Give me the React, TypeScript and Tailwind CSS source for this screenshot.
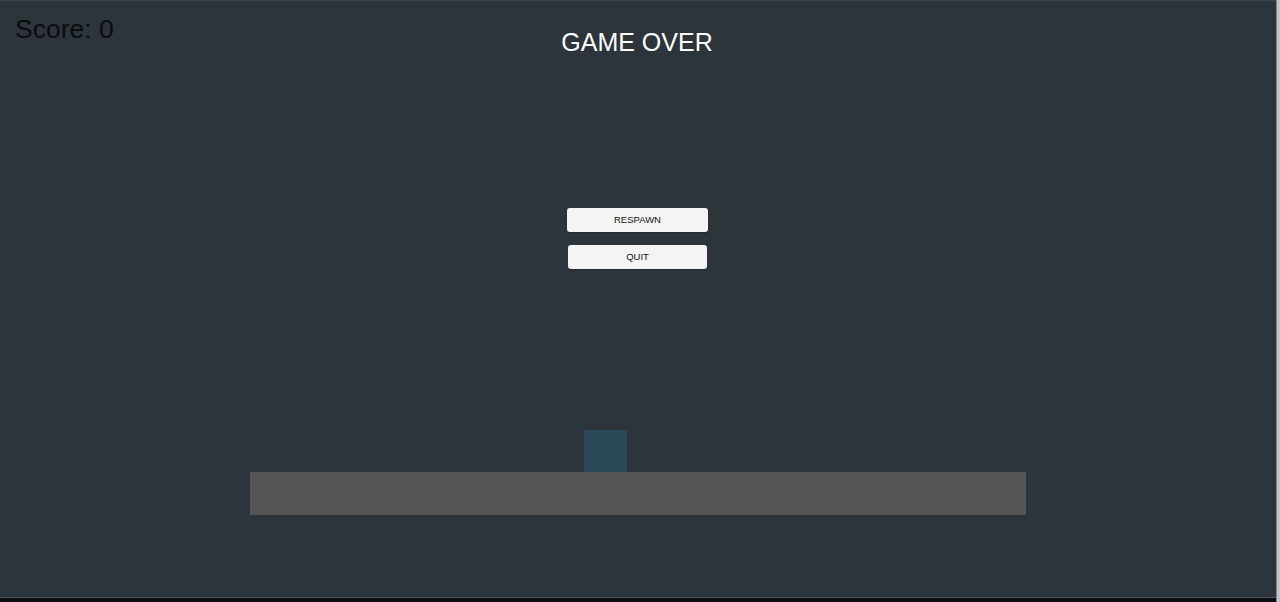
const font = { fontFamily: '"Liberation Sans", Arial, sans-serif' };

const MenuButton = ({ label, wide }: { label: string; wide?: boolean }) => (
  <button
    className={`h-[24px] rounded-[3px] bg-[#f4f4f4] text-[9.5px] leading-none text-[#111] shadow-[0_1px_1px_rgba(0,0,0,0.25)] ${
      wide ? 'w-[141px]' : 'w-[139px]'
    }`}
  >
    {label}
  </button>
);

export default function App() {
  return (
    <div className="flex h-[602px] w-[1280px] bg-[#0b0d0e]" style={font}>
      <div className="flex flex-1 flex-col">
        <div className="relative flex flex-1 flex-col border-t border-[#3a4248] bg-[#2b353b]">
          {/* HUD */}
          <div className="absolute left-[15px] top-[13px] text-[26.5px] leading-[30px] text-[#0a0c0d]">Score: 0</div>

          <h1 className="pt-[27px] pr-[2px] text-center text-[25px] leading-[29px] text-white">GAME OVER</h1>

          <div className="mt-[151px] flex flex-col items-center gap-[13px] pr-[1px]">
            <MenuButton label="RESPAWN" wide />
            <MenuButton label="QUIT" />
          </div>

          {/* level: player block resting on the floor */}
          <div className="mt-[161px] ml-[250px] flex w-[776px] flex-col">
            <div className="ml-[334px] h-[42px] w-[43px] bg-[#2a4858]" />
            <div className="h-[43px] bg-[#565656]" />
          </div>
        </div>
        <div className="h-[1px] bg-[#4a5358]" />
        <div className="h-[4px] bg-[#0b0d0e]" />
      </div>
      <div className="w-[4px] border-l border-[#7d8286] bg-[#c4c4c4]" />
    </div>
  );
}
